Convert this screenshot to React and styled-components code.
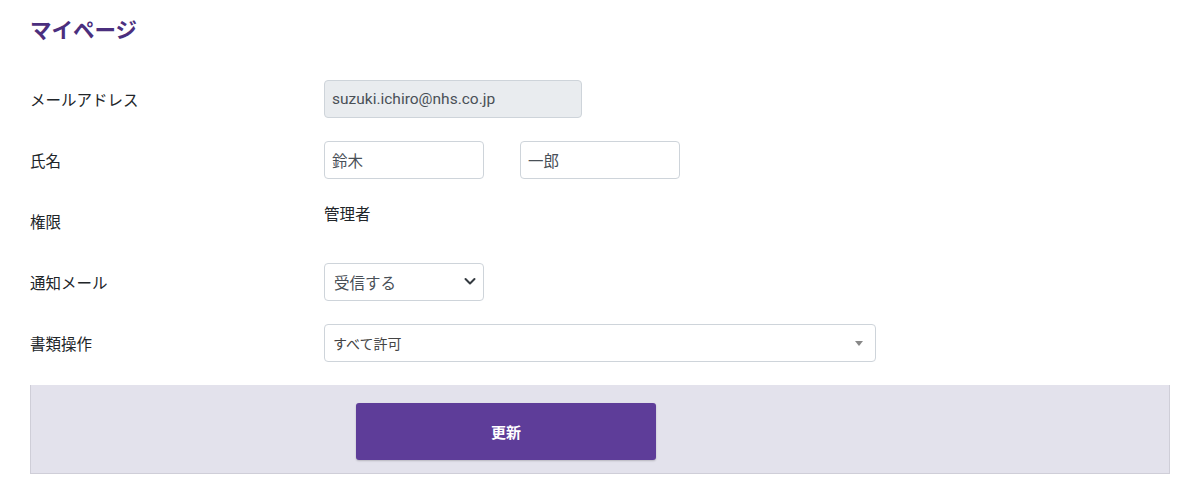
import React from "react";
import styled, { createGlobalStyle } from "styled-components";

const GlobalStyle = createGlobalStyle`
  body {
    margin: 0;
    background: #fff;
    font-family: "Segoe UI", Roboto, "Noto Sans CJK JP", sans-serif;
    color: #212529;
  }
`;

const Page = styled.div`
  width: 1140px;
  padding: 16px 0 0 30px;
`;

const Title = styled.h1`
  margin: 0 0 38px;
  font-size: 21.5px;
  line-height: 26px;
  font-weight: 700;
  color: #4b2f7e;
  font-family: "Noto Sans CJK JP", sans-serif;
`;

const Row = styled.div`
  display: flex;
  align-items: center;
  height: 38px;
  margin-bottom: 23px;
`;

const Label = styled.div`
  width: 294px;
  flex-shrink: 0;
  font-size: 15.5px;
  line-height: 38px;
  font-family: "Noto Sans CJK JP", sans-serif;
  color: #212529;
`;

const Fields = styled.div`
  display: flex;
  gap: 36px;
  align-items: center;
`;

const Input = styled.input`
  box-sizing: border-box;
  width: ${(p) => p.w || 160}px;
  height: 38px;
  padding: 0 7px;
  border: 1px solid #ced4da;
  border-radius: 4px;
  background: ${(p) => (p.readOnly && p.gray ? "#e9ecef" : "#fff")};
  color: #495057;
  font-size: 15.5px;
  font-family: "Segoe UI", Roboto, "Noto Sans CJK JP", sans-serif;
  outline: none;
`;

const PlainValue = styled.div`
  font-size: 15.5px;
  line-height: 24px;
  color: #212529;
  font-family: "Noto Sans CJK JP", sans-serif;
  transform: translateY(-8px);
`;

const SelectWrap = styled.div`
  position: relative;
  width: 160px;
  height: 38px;
`;

const NativeSelect = styled.select`
  box-sizing: border-box;
  appearance: none;
  width: 100%;
  height: 100%;
  padding: 0 28px 0 9px;
  border: 1px solid #ced4da;
  border-radius: 4px;
  background: #fff;
  color: #495057;
  font-size: 15.5px;
  font-family: "Noto Sans CJK JP", sans-serif;
  outline: none;
`;

const Chevron = styled.svg`
  position: absolute;
  right: 8px;
  top: 14px;
  pointer-events: none;
`;

const Select2 = styled.div`
  box-sizing: border-box;
  position: relative;
  width: 552px;
  height: 38px;
  display: flex;
  align-items: center;
  padding: 0 8px;
  border: 1px solid #ced4da;
  border-radius: 4px;
  background: #fff;
  color: #444;
  font-size: 14px;
  font-family: "Noto Sans CJK JP", sans-serif;
`;

const Arrow = styled.span`
  position: absolute;
  right: 12px;
  top: 16px;
  width: 0;
  height: 0;
  border-left: 4px solid transparent;
  border-right: 4px solid transparent;
  border-top: 5px solid #888;
`;

const Footer = styled.div`
  box-sizing: border-box;
  height: 89px;
  margin-top: 23px;
  padding: 18px 0 0 325px;
  background: #e3e2ec;
  border: 1px solid #cfced8;
  border-top: none;
`;

const Button = styled.button`
  width: 300px;
  height: 57px;
  border: none;
  border-radius: 3px;
  background: #5e3d99;
  color: #fff;
  font-size: 15px;
  font-weight: 700;
  font-family: "Noto Sans CJK JP", sans-serif;
  box-shadow: 0 1px 2px rgba(0, 0, 0, 0.2);
  cursor: pointer;
`;

export default function App() {
  return (
    <>
      <GlobalStyle />
      <Page>
        <Title>マイページ</Title>
        <Row>
          <Label>メールアドレス</Label>
          <Input w={258} gray readOnly defaultValue="suzuki.ichiro@nhs.co.jp" />
        </Row>
        <Row>
          <Label>氏名</Label>
          <Fields>
            <Input defaultValue="鈴木" />
            <Input defaultValue="一郎" />
          </Fields>
        </Row>
        <Row>
          <Label>権限</Label>
          <PlainValue>管理者</PlainValue>
        </Row>
        <Row>
          <Label>通知メール</Label>
          <SelectWrap>
            <NativeSelect defaultValue="on">
              <option value="on">受信する</option>
              <option value="off">受信しない</option>
            </NativeSelect>
            <Chevron width="12" height="9" viewBox="0 0 12 9">
              <path d="M1.5 2l4.5 4.5 4.5-4.5" fill="none" stroke="#343a40" strokeWidth="2" strokeLinecap="round" strokeLinejoin="round" />
            </Chevron>
          </SelectWrap>
        </Row>
        <Row>
          <Label>書類操作</Label>
          <Select2>
            すべて許可
            <Arrow />
          </Select2>
        </Row>
        <Footer>
          <Button>更新</Button>
        </Footer>
      </Page>
    </>
  );
}
